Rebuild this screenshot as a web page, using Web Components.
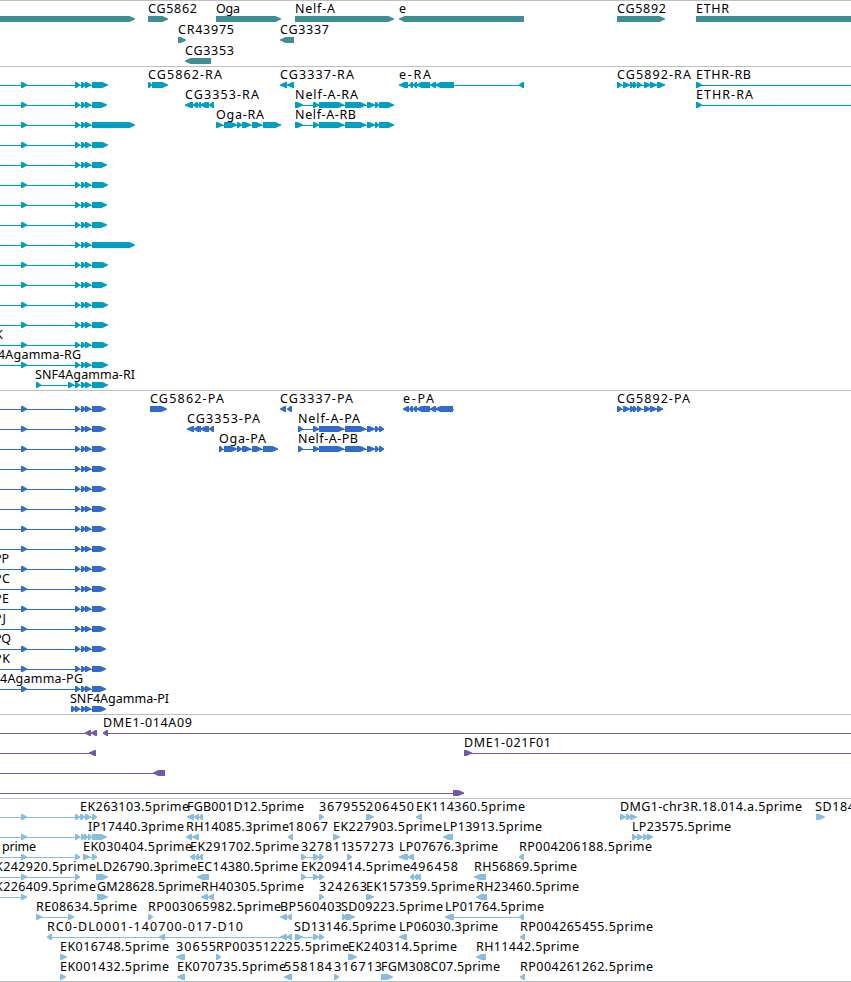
<!DOCTYPE html>
<html lang="en">
<head>
<meta charset="utf-8">
<title>Genome browser</title>
<style>
  html, body { margin: 0; background: #fff; }
  body { height: 982px; overflow: hidden; }
</style>
</head>
<body>
<genome-view></genome-view>

<script>
/*
 * Row format: "lines | exons | labels"
 *   lines   x1-x2
 *   exons   x1>x2 (forward) or x1<x2 (reverse)
 *   labels  x1:x2:text
 */
const SNF = '21>27 75>80 81>86 85>91';
const NELF = '313>319 319>344 345>366 367>375 375>379';
const snfRow = (end, label = '') => `0-95|${SNF} 92>${end}|${label}`;

const TRACKS = [
  { name: 'genes', color: '#3e8e94', pitch: 21, pad: 1, rows: [
    '|0>135 148>168 216>281 295>394 399<524 617>665 696>870|148:197:CG5862 216:240:Oga 295:335:Nelf-A 399:407:e 617:666:CG5892 696:729:ETHR',
    '|178>186 280<294|178:234:CR43975 280:329:CG3337',
    '|185<211|185:234:CG3353'
  ] },
  { name: 'transcripts', color: '#009fc0', rows: [
    `0-95 399-524 617-665 696-851|${SNF} 92>108 148>152 152>168 280<287 287<294 399<408 409<413 413<417 416<430 430<436 435<454 519<524 617>622 623>630 630>634 633>637 637>642 644>651 650>657 657>665 696>702|148:222:CG5862-RA 280:354:CG3337-RA 399:431:e-RA 617:691:CG5892-RA 696:751:ETHR-RB`,
    `0-95 185-214 295-394 696-851|${SNF} 92>107 185<193 193<198 198<201 200<209 209<214 295>303 ${NELF} 379>394 696>702|185:259:CG3353-RA 295:358:Nelf-A-RA 696:753:ETHR-RA`,
    `0-95 216-281 295-394|${SNF} 92>135 216>223 224>237 237>242 242>251 252>262 263>281 295>303 ${NELF} 379>394|216:264:Oga-RA 295:356:Nelf-A-RB`,
    ...[108, 107, 108, 107, 107, 135, 108, 107, 108, 108].map(end => snfRow(end)),
    snfRow(108, '-5:3:K'),
    snfRow(108, '-2:81:4Agamma-RG'),
    '36-95|36>41 68>74 75>80 81>86 85>91 92>108|35:135:SNF4Agamma-RI'
  ] },
  { name: 'proteins', color: '#306ccb', rows: [
    `0-95 403-454 617-663|${SNF} 92>106 150>152 151>167 280<286 287<292 403<409 409<413 413<417 416<430 430<436 435<453 617>622 623>630 630>634 633>637 637>642 644>651 650>657 657>663|150:224:CG5862-PA 280:353:CG3337-PA 403:434:e-PA 617:690:CG5892-PA`,
    `0-95 187-214 298-384|${SNF} 92>106 187<194 194<199 198<201 200<209 209<214 298>303 ${NELF} 379>384|187:260:CG3353-PA 298:360:Nelf-A-PA`,
    `0-95 219-278 298-384|${SNF} 92>106 219>223 224>237 237>242 242>251 252>262 263>278 298>303 ${NELF} 379>384|219:266:Oga-PA 298:358:Nelf-A-PB`,
    ...Array(5).fill(snfRow(106)),
    ...['PP', 'PC', 'PE', 'PJ', 'PQ', 'PK'].map(s => snfRow(106, `-6:${{ PP: 9, PC: 10, PE: 9, PJ: 6, PQ: 11, PK: 10 }[s]}:${s}`)),
    snfRow(106, '0:83:4Agamma-PG'),
    '71-95|71>76 75>80 81>86 85>91 92>106|70:169:SNF4Agamma-PI'
  ] },
  { name: 'cdna', color: '#7458a8', rows: [
    '0-97 103-851|85<91 91<97 103<108|103:192:DME1-014A09',
    '0-96 464-851|89<96 464>472|464:551:DME1-021F01',
    '0-165|153<165|',
    '0-464|453>464|'
  ] },
  { name: 'est', color: '#89bddf', pad: 1, rows: [
    '0-97|21>27 75>80 80>85 85>91 92>97 187<194 194<199 199<203 319>324 366>374 416<422 620>626 626>631 630>637 816>825|80:189:EK263103.5prime 187:304:FGB001D12.5prime 319:366:367955 366:414:206450 416:525:EK114360.5prime 620:802:DMG1-chr3R.18.014.a.5prime 815:855:SD184',
    '0-95|21>27 75>80 81>85 84>88 88>92 92>107 186<192 192<199 288<293 333>340 443<453 632>637 637>643 643>648 647>653|88:184:IP17440.3prime 186:289:RH14085.3prime 288:328:18067 333:442:EK227903.5prime 443:542:LP13913.5prime 632:731:LP23575.5prime',
    '0-80 83-97 301-324 399-414|21>27 75>80 83>90 92>97 190<195 195<199 199<203 301>306 313>319 319>324 347>352 399<408 408<414 519<524|2:36:prime 83:192:EK030404.5prime 190:299:EK291702.5prime 301:348:327811 347:394:357273 399:498:LP07676.3prime 519:652:RP004206188.5prime',
    '0-80 301-324|21>27 75>80 96>108 197<209 301>306 313>319 319>324 410<414 414<418 417<421 474<486|-5:96:K242920.5prime 96:197:LD26790.3prime 197:298:EC14380.5prime 301:410:EK209414.5prime 410:458:496458 474:577:RH56869.5prime',
    '0-26|21>27 97>108 201<208 208<214 319>324 366>374 476<487|-5:96:K226409.5prime 97:201:GM28628.5prime 201:304:RH40305.5prime 319:367:324263 366:475:EK157359.5prime 476:579:RH23460.5prime',
    '36-74 445-524|36>42 68>74 148>153 280<287 287<292 342>346 345>355 445<454 519<524|36:137:RE08634.5prime 148:281:RP003065982.5prime 280:342:BP560403 341:443:SD09223.5prime 445:544:LP01764.5prime',
    '47-292 295-324|47<52 159<165 280<287 287<292 295>303 313>319 319>324 399<407 520<525|47:243:RC0-DL0001-140700-017-D10 294:396:SD13146.5prime 399:498:LP06030.3prime 520:653:RP004265455.5prime',
    '|60>67 176<185 216>221 348>357 476<486|60:169:EK016748.5prime 176:216:30655 216:349:RP003512225.5prime 348:457:EK240314.5prime 476:579:RH11442.5prime',
    '|60>66 177<185 284<292 334>339 381>393 520<525|60:169:EK001432.5prime 177:286:EK070735.5prime 284:332:558184 334:382:316713 381:500:FGM308C07.5prime 520:653:RP004261262.5prime'
  ] }
];

/* One layout row: introns, exons and names on the shared axis */
class FeatureRow extends HTMLElement {
  connectedCallback() {
    this.attachShadow({ mode: 'open' });
    const [lines, exons, labels] = this.getAttribute('features').split('|');
    const list = s => s.split(' ').filter(Boolean);

    const introns = list(lines).map(s => {
      const [a, b] = s.split('-').map(Number);
      return `<rect x="${a}" y="17" width="${b - a}" height="1"/>`;
    }).join('');

    const blocks = list(exons).map(s => this._exon(s)).join('');

    const names = list(labels).map(s => {
      const [, a, b, text] = s.match(/^(-?\d+):(\d+):(.*)$/);
      return `<text x="${a}" y="11" textLength="${b - a}">${text}</text>`;
    }).join('');

    this.shadowRoot.innerHTML = `
      <style>
        :host { display: block; height: var(--pitch, 20px); }
        svg { display: block; width: 100%; height: 20px; overflow: visible; }
        .glyphs { fill: var(--feature-color); }
        text { font: 12.5px "Noto Sans", "DejaVu Sans", sans-serif; fill: #000; white-space: pre; }
      </style>
      <svg aria-hidden="false">
        <g class="glyphs" shape-rendering="crispEdges">${introns}</g>
        <g class="glyphs">${blocks}</g>
        ${names}
      </svg>`;
  }

  /* Box with a pointed end; short exons are mostly the point */
  _exon(s) {
    const [, p, dir, q] = s.match(/^(\d+)([<>])(\d+)$/);
    const a = +p, b = +q;
    const tip = Math.min(6, b - a - 1);
    return dir === '>'
      ? `<path d="M${a} 14H${b - tip + .5}L${b} 16.5V17.5L${b - tip + .5} 20H${a}Z"/>`
      : `<path d="M${b} 14H${a + tip - .5}L${a} 16.5V17.5L${a + tip - .5} 20H${b}Z"/>`;
  }
}
customElements.define('feature-row', FeatureRow);

/* Group of rows under a separator line */
class GenomeTrack extends HTMLElement {
  connectedCallback() {
    this.attachShadow({ mode: 'open' }).innerHTML = `
      <style>
        :host {
          display: flex;
          flex-direction: column;
          border-top: 1px solid #bfbfbf;
          padding: 1px 0 var(--pad, 2px);
        }
      </style>
      <slot></slot>`;
  }
}
customElements.define('genome-track', GenomeTrack);

class GenomeView extends HTMLElement {
  connectedCallback() {
    const tracks = TRACKS.map(t => `
      <genome-track aria-label="${t.name}" style="--feature-color:${t.color};--pitch:${t.pitch || 20}px;--pad:${t.pad || 2}px">
        ${t.rows.map(r => `<feature-row features="${r.replace(/</g, '&lt;')}"></feature-row>`).join('')}
      </genome-track>`).join('');

    this.attachShadow({ mode: 'open' }).innerHTML = `
      <style>
        :host {
          display: block;
          width: 851px;
          overflow: hidden;
          border-bottom: 1px solid #bfbfbf;
        }
      </style>
      ${tracks}`;
  }
}
customElements.define('genome-view', GenomeView);
</script>
</body>
</html>
